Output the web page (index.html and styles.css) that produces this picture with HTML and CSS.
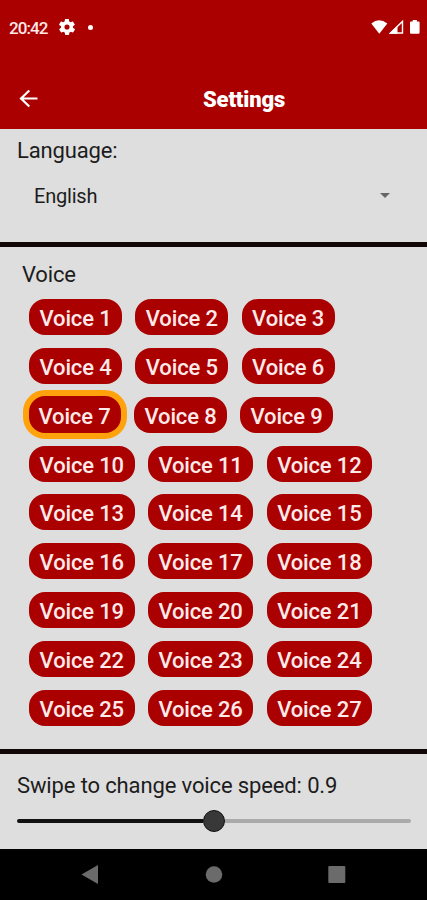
FILE: index.html
```html
<!DOCTYPE html>
<html lang="en">
<head>
<meta charset="utf-8">
<title>Settings</title>
<link rel="stylesheet" href="styles.css">
</head>
<body>
<header class="header">
  <div class="status">
    <span class="clock">20:42</span>
    <svg class="gear" width="16" height="16" viewBox="2 2 20 20"><path fill="#fff" fill-rule="evenodd" d="M19.4 13c.1-.3.1-.7.1-1s0-.7-.1-1l2.1-1.600c.2-.2.3-.4.1-.7l-2-3.400c-.1-.3-.4-.3-.6-.2l-2.500 1c-.5-.4-1.100-.7-1.700-1l-.4-2.600c0-.3-.2-.5-.5-.5h-4c-.3 0-.4.2-.5.5l-.4 2.600c-.6.3-1.100.6-1.700 1l-2.500-1c-.2-.1-.5 0-.6.2l-2 3.400c-.1.3-.1.5.1.7L4.600 11c-.1.3-.1.7-.1 1s0 .7.1 1l-2.100 1.600c-.2.2-.3.4-.1.7l2 3.400c.1.3.4.3.6.2l2.500-1c.5.4 1.100.7 1.700 1l.4 2.600c.1.3.2.5.5.5h4c.3 0 .5-.2.5-.5l.4-2.600c.6-.3 1.200-.6 1.700-1l2.500 1c.2.1.5 0 .6-.2l2-3.400c.2-.3.1-.5-.1-.7zM12 15.200a3.200 3.200 0 1 1 0-6.400 3.200 3.200 0 0 1 0 6.400z"/></svg>
    <span class="dot"></span>
    <svg class="signals" width="50" height="16" viewBox="0 0 50 16"><path fill="#fff" d="M1.300 4.500Q9-1.800 17.300 4.500L9.300 14.700z"/><path fill="none" stroke="#fff" stroke-width="1.400" d="M20.500 14L32.500 2.500V14z"/><path fill="#fff" d="M19 14.700l8.500-8v8zM41 2.500h1.700V1h4.200v1.500h1.700q1 0 1 1v10.200q0 1-1 1H41q-1 0-1-1V3.500q0-1 1-1z"/></svg>
  </div>
  <div class="appbar">
    <svg class="back" width="20" height="20" viewBox="0 0 20 20"><path fill="none" stroke="#fff" stroke-width="2.200" d="M19.500 9.500H3.300M11.300 1.500L3 9.500l8.300 8"/></svg>
    <h1 class="title">Settings</h1>
  </div>
</header>
<main>
  <section class="language">
    <div class="label">Language:</div>
    <div class="select"><span>English</span><span class="caret"></span></div>
  </section>
  <section class="voices">
    <h2 class="voice-title">Voice</h2>
    <div class="rows">
      <div class="row"><button class="chip">Voice 1</button><button class="chip">Voice 2</button><button class="chip">Voice 3</button></div>
      <div class="row"><button class="chip">Voice 4</button><button class="chip">Voice 5</button><button class="chip">Voice 6</button></div>
      <div class="row picked"><button class="chip selected">Voice 7</button><button class="chip">Voice 8</button><button class="chip">Voice 9</button></div>
      <div class="row wide"><button class="chip">Voice 10</button><button class="chip">Voice 11</button><button class="chip">Voice 12</button></div>
      <div class="row wide"><button class="chip">Voice 13</button><button class="chip">Voice 14</button><button class="chip">Voice 15</button></div>
      <div class="row wide"><button class="chip">Voice 16</button><button class="chip">Voice 17</button><button class="chip">Voice 18</button></div>
      <div class="row wide"><button class="chip">Voice 19</button><button class="chip">Voice 20</button><button class="chip">Voice 21</button></div>
      <div class="row wide"><button class="chip">Voice 22</button><button class="chip">Voice 23</button><button class="chip">Voice 24</button></div>
      <div class="row wide"><button class="chip">Voice 25</button><button class="chip">Voice 26</button><button class="chip">Voice 27</button></div>
    </div>
  </section>
  <section class="speed">
    <div class="speed-label">Swipe to change voice speed: 0.9</div>
    <div class="slider"><span class="done"></span><span class="thumb"></span><span class="rest"></span></div>
  </section>
</main>
<nav class="nav">
  <svg width="427" height="51" viewBox="0 0 427 51" fill="#6b6b6b"><path d="M81.500 25.500L98 16v19z"/><circle cx="214" cy="25.500" r="8.300"/><rect x="328.300" y="17" width="17" height="17" rx="1"/></svg>
</nav>
</body>
</html>
```
FILE: styles.css
```css
* { box-sizing: border-box; }
body { margin: 0; width: 427px; height: 900px; overflow: hidden; background: #dedede; font-family: Roboto, sans-serif; color: #1c1c1c; display: flex; flex-direction: column; }
.header { height: 128.500px; flex: none; background: #aa0000; color: #fff; }
.status { height: 56px; display: flex; align-items: center; padding: 0 7px 2px 9px; }
.clock { width: 50px; padding-top: 1px; font-size: 17px; line-height: 20px; letter-spacing: -.9px; font-weight: 500; color: #ffe9e9; }
.gear { display: block; }
.dot { width: 5px; height: 5px; border-radius: 50%; background: #fff; margin-left: 13px; }
.signals { margin-left: auto; margin-top: -1px; }
.appbar { height: 72px; display: flex; align-items: center; padding: 13px 0 0 18px; }
.title { margin: 2px 0 0 165px; font-size: 22px; line-height: 28px; font-weight: 900; letter-spacing: -.15px; }
main { flex: none; height: 720.500px; display: flex; flex-direction: column; }
.language { height: 118.300px; border-bottom: 5px solid #120707; padding: 8px 17px 0; }
.label { font-size: 22px; line-height: 28px; letter-spacing: -.15px; }
.select { height: 48px; margin-top: 7px; padding: 0 20px 0 17px; display: flex; align-items: center; justify-content: space-between; font-size: 20px; letter-spacing: -.2px; }
.caret { border: 5.500px solid transparent; border-top-color: #666; border-bottom: 0; }
.voices { height: 507.200px; border-bottom: 5px solid #120707; padding: 14px 0 0 22px; }
.voice-title { margin: 0; font-size: 22px; line-height: 28px; font-weight: 400; letter-spacing: -.15px; }
.rows { margin-top: 4px; }
.row { height: 48.800px; display: flex; align-items: center; gap: 13.300px; padding-left: 7px; }
.chip { width: 93px; height: 36px; padding: 3px 0 0; border: 0; border-radius: 16px; background: #aa0000; color: #ffe9e9; font: 500 22px/33px Roboto, sans-serif; letter-spacing: -.15px; text-align: center; }
.wide .chip { width: 105.500px; }
.picked { padding-left: .5px; gap: 7.500px; }
.picked .chip + .chip { margin-right: 5.500px; }
.chip.selected { width: 104px; height: 49px; border: 6px solid #ffa20c; border-radius: 22px; flex: none; }
.speed { flex: 1; padding: 18.500px 16px 0 17px; }
.speed-label { font-size: 22px; line-height: 28px; letter-spacing: -.13px; }
.slider { display: flex; align-items: center; height: 22px; margin-top: 10px; }
.done { width: 186px; height: 4px; border-radius: 2px 0 0 2px; background: #111; }
.thumb { width: 22px; height: 22px; border-radius: 50%; background: #383838; border: 1.500px solid #111; }
.rest { flex: 1; height: 4px; border-radius: 0 2px 2px 0; background: #aaa; }
.nav { flex: 1; background: #000; }
.nav svg { display: block; }
```
